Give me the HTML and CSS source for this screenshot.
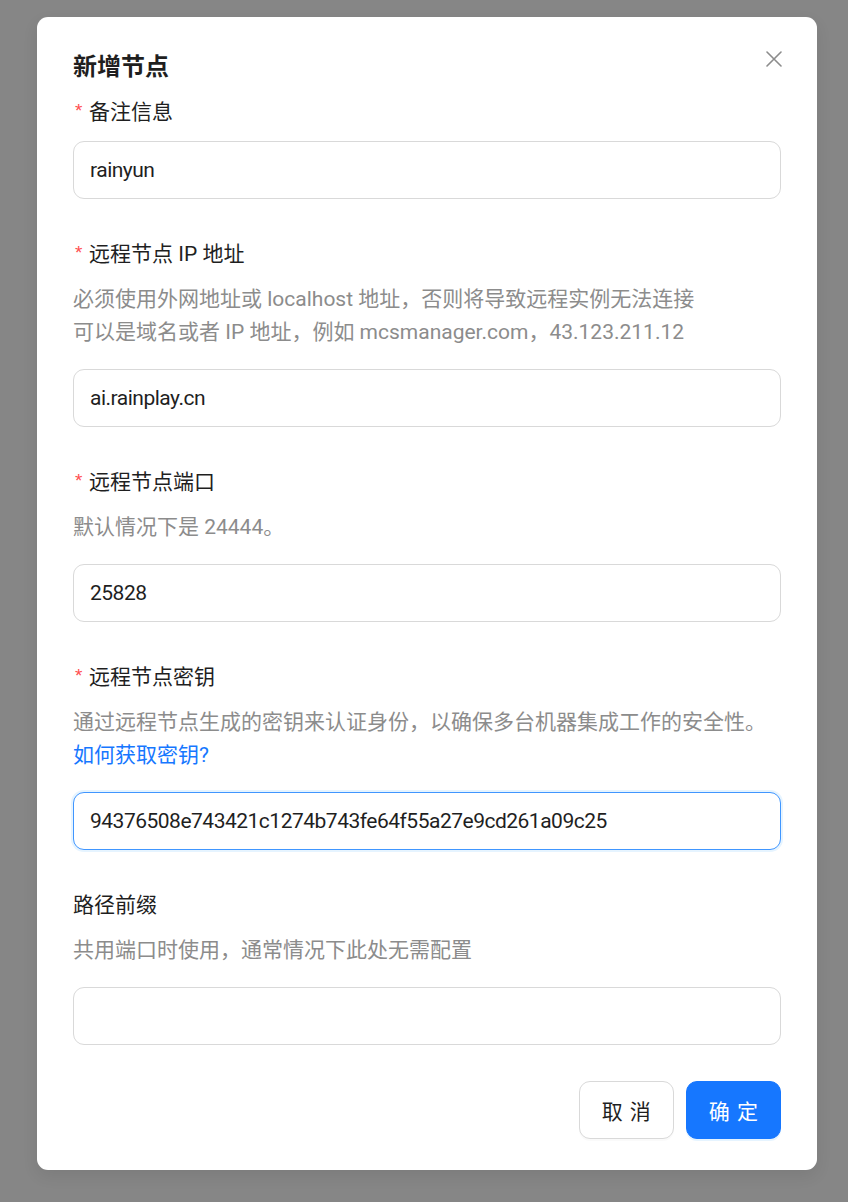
FILE: index.html
```html
<!DOCTYPE html>
<html lang="zh-CN">
<head>
<meta charset="utf-8">
<title>新增节点</title>
<link rel="stylesheet" href="styles.css">
</head>
<body>
<div class="modal">
  <button class="close" type="button" aria-label="关闭">
    <svg width="16" height="16" viewBox="0 0 16 16"><path d="M1 1 L15 15 M15 1 L1 15" stroke="#8c8c8c" stroke-width="1.6" fill="none" stroke-linecap="round"/></svg>
  </button>
  <h2 class="title">新增节点</h2>
  <div class="form">
    <div class="item">
      <div class="label"><span class="req">*</span>备注信息</div>
      <input class="input" type="text" value="rainyun">
    </div>
    <div class="item">
      <div class="label"><span class="req">*</span>远程节点 IP 地址</div>
      <div class="help">必须使用外网地址或 localhost 地址，否则将导致远程实例无法连接<br>可以是域名或者 IP 地址，例如 mcsmanager.com，43.123.211.12</div>
      <input class="input" type="text" value="ai.rainplay.cn">
    </div>
    <div class="item">
      <div class="label"><span class="req">*</span>远程节点端口</div>
      <div class="help">默认情况下是 24444。</div>
      <input class="input" type="text" value="25828">
    </div>
    <div class="item">
      <div class="label"><span class="req">*</span>远程节点密钥</div>
      <div class="help">通过远程节点生成的密钥来认证身份，以确保多台机器集成工作的安全性。<br><a class="link" href="#">如何获取密钥?</a></div>
      <input class="input focused" type="text" value="94376508e743421c1274b743fe64f55a27e9cd261a09c25">
    </div>
    <div class="item last">
      <div class="label">路径前缀</div>
      <div class="help">共用端口时使用，通常情况下此处无需配置</div>
      <input class="input" type="text" value="">
    </div>
  </div>
  <div class="footer">
    <button class="btn" type="button"><span>取消</span></button>
    <button class="btn primary" type="button"><span>确定</span></button>
  </div>
</div>
</body>
</html>
```

FILE: styles.css
```css
html, body {
  margin: 0;
  padding: 0;
}
body {
  background: #868686;
  padding: 17px 31px 0 37px;
  height: 1202px;
  box-sizing: border-box;
  font-family: Roboto, "Noto Sans CJK SC", sans-serif;
  font-size: 21px;
  color: #1f1f1f;
}
.modal {
  position: relative;
  width: 780px;
  box-sizing: border-box;
  background: #fff;
  border-radius: 11px;
  padding: 32px 36px 31px 36px;
  box-shadow: 0 6px 16px rgba(0,0,0,0.08);
}
.close {
  position: absolute;
  top: 26px;
  right: 27px;
  width: 32px;
  height: 32px;
  padding: 0;
  border: none;
  background: transparent;
  display: flex;
  align-items: center;
  justify-content: center;
}
.title {
  margin: 0 0 11px 0;
  font-size: 24px;
  line-height: 36px;
  font-weight: 700;
  color: #1f1f1f;
}
.item {
  margin-bottom: 39px;
}
.item.last {
  margin-bottom: 0;
}
.label {
  line-height: 33px;
  margin-bottom: 12px;
  color: #1f1f1f;
}
.req {
  display: inline-block;
  width: 16px;
  color: #ff4d4f;
  font-size: 19px;
  font-family: "Liberation Mono", monospace;
  vertical-align: top;
  line-height: 33px;
}
.help {
  line-height: 33px;
  color: #8c8c8c;
  margin-bottom: 20px;
}
.link {
  color: #1677ff;
  text-decoration: none;
}
.input {
  display: block;
  width: 100%;
  height: 58px;
  box-sizing: border-box;
  border: 1px solid #d9d9d9;
  border-radius: 11px;
  padding: 0 16px;
  font-family: Roboto, "Noto Sans CJK SC", sans-serif;
  font-size: 21px;
  letter-spacing: -0.5px;
  color: #1f1f1f;
  background: #fff;
  outline: none;
}
.input.focused {
  border-color: #4096ff;
  box-shadow: 0 0 0 2px rgba(5,145,255,0.1);
}
.footer {
  margin-top: 36px;
  display: flex;
  justify-content: flex-end;
  gap: 12px;
}
.btn {
  height: 58px;
  padding: 0 22px;
  white-space: nowrap;
  border: 1px solid #d9d9d9;
  border-radius: 11px;
  background: #fff;
  color: #1f1f1f;
  font-family: "Noto Sans CJK SC", sans-serif;
  font-size: 21px;
  box-shadow: 0 2px 0 rgba(0,0,0,0.02);
}
.btn span {
  letter-spacing: 0.34em;
  margin-right: -0.34em;
}
.btn.primary {
  background: #1677ff;
  border-color: #1677ff;
  color: #fff;
  box-shadow: 0 2px 0 rgba(5,145,255,0.1);
}
```
